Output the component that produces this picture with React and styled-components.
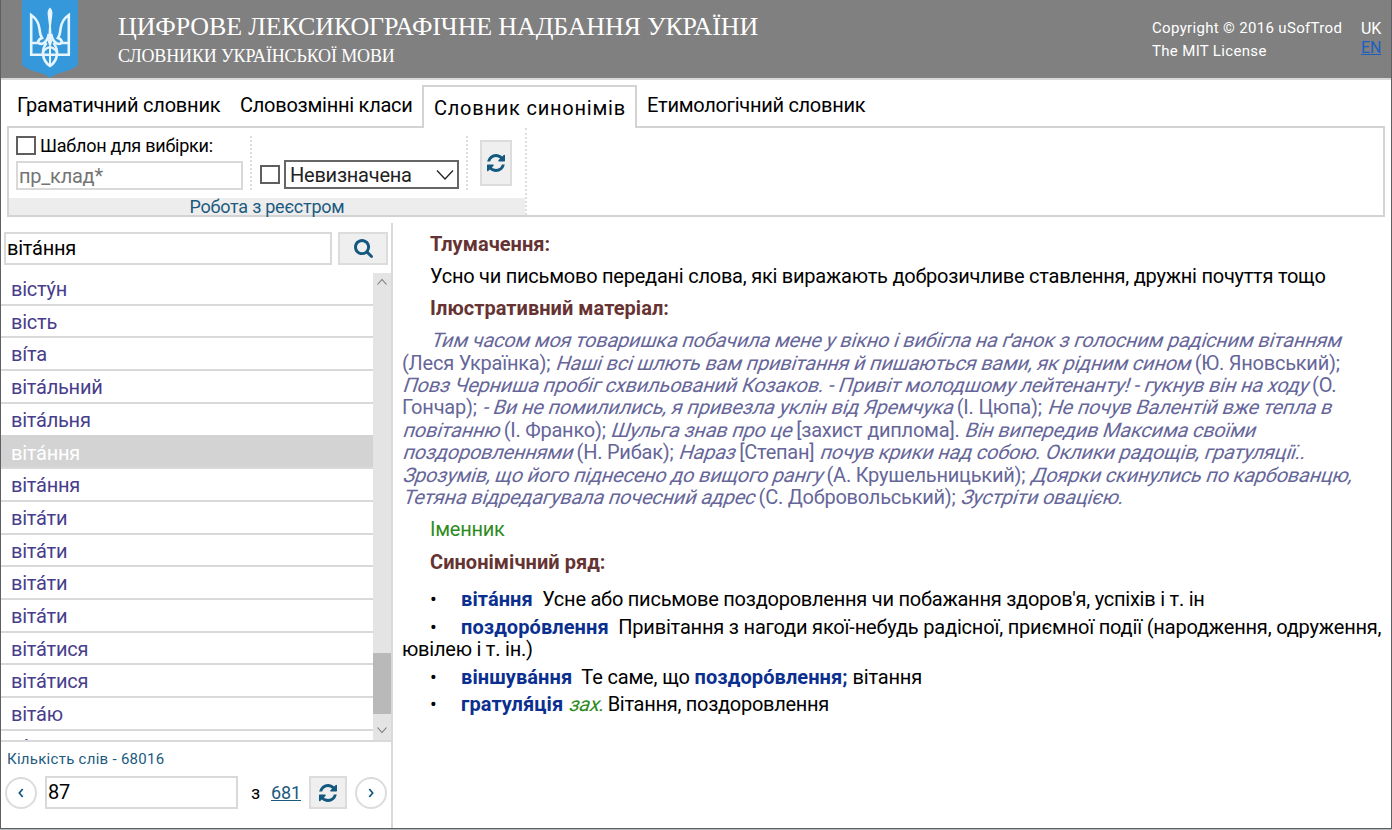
import React from "react";
import styled, { createGlobalStyle, css } from "styled-components";

const Global = createGlobalStyle`
  *, *::before, *::after { box-sizing: border-box; }
  html, body { margin: 0; padding: 0; overflow: hidden; background: #fff; }
  body { font-family: Roboto, "Liberation Sans", sans-serif; font-size: 20px; color: #000; letter-spacing: -0.24px; }
  input, button { font-family: inherit; letter-spacing: inherit; margin: 0; border-radius: 0; }
`;

const Page = styled.div`
  width: 1392px;
  height: 830px;
  display: flex;
  flex-direction: column;
  border-bottom: 1px solid #b4bcbc;
`;
const Frame = styled.div`
  flex: 1;
  min-height: 0;
  display: flex;
  flex-direction: column;
  border: solid #5c5f66;
  border-width: 0 1px 1px 1px;
`;
const Header = styled.header`
  height: 80px;
  flex: none;
  display: flex;
  background: #808080;
  border-bottom: 2px solid #d9d9d9;
  color: #fff;
`;
const Emblem = styled.svg`
  width: 56px;
  height: 78px;
  margin-left: 21px;
  flex: none;
`;
const Titles = styled.div`
  margin-left: 40px;
  flex: 1;
  font-family: "Liberation Serif", serif;
  letter-spacing: -0.14px;
  white-space: nowrap;
`;
const Title = styled.div`
  margin-top: 12px;
  font-size: 26px;
  line-height: 30px;
`;
const Subtitle = styled.div`
  margin-top: 4px;
  font-size: 18px;
  line-height: 20px;
`;
const Copyright = styled.div`
  margin-top: 17px;
  width: 209px;
  font-size: 15px;
  line-height: 23px;
  letter-spacing: 0.33px;
  white-space: nowrap;
`;
const Languages = styled.div`
  margin-top: 19px;
  width: 30px;
  font-size: 16px;
  line-height: 19px;
  letter-spacing: -0.1px;
`;
const LangLink = styled.a`
  display: block;
  color: #1b5fc0;
  text-decoration: underline;
`;

const Tabs = styled.nav`
  height: 48px;
  flex: none;
  display: flex;
  align-items: flex-start;
  padding: 5px 0 0 16px;
  position: relative;
  z-index: 1;
  white-space: nowrap;
`;
const Tab = styled.div`
  width: ${(p) => p.$w}px;
  line-height: 24px;
  padding-top: 8px;
  letter-spacing: ${(p) => p.$ls || -0.2}px;
  ${(p) =>
    p.$active &&
    css`
      height: 43px;
      margin-right: 10px;
      padding: 9px 0 0 10px;
      border: 2px solid #d3d3d3;
      border-bottom: 0;
      background: #fff;
    `}
`;
const Ribbon = styled.section`
  height: 91px;
  flex: none;
  margin: -2px 6px 0 6px;
  border: 2px solid #d3d3d3;
  display: flex;
`;
const Group = styled.div`
  width: 518px;
  display: flex;
  flex-direction: column;
  border-right: 2px dotted #ddd;
`;
const GroupBody = styled.div`
  flex: 1;
  display: flex;
`;
const GroupLabel = styled.div`
  height: 17px;
  background: #ededed;
  color: #1c5a80;
  font-size: 18px;
  line-height: 17px;
  text-align: center;
`;
const Pane = styled.div`
  width: ${(p) => p.$w}px;
  height: 54px;
  margin-top: 8px;
  padding-left: ${(p) => p.$pl}px;
  border-right: ${(p) => (p.$last ? "0" : "2px dotted #ddd")};
`;
const Check = styled.span`
  width: 20px;
  height: 19px;
  flex: none;
  border: 2px solid #5f5f5f;
  background: #fff;
`;
const Inline = styled.div`
  display: flex;
  align-items: center;
  margin-top: ${(p) => p.$mt || 0}px;
  gap: 4px;
`;
const Caption = styled.span`
  font-size: 18px;
  line-height: 19px;
  white-space: nowrap;
`;
const TextBox = styled.input`
  display: block;
  width: ${(p) => p.$w}px;
  height: ${(p) => p.$h}px;
  padding: 0 1px;
  border: 2px solid #d9d9d9;
  font-size: 20px;
  color: #000;
  outline: 0;
  &::placeholder { color: #757575; opacity: 1; }
`;
const TemplateBox = styled(TextBox)`
  margin-top: 6px;
`;
const SearchBox = styled(TextBox)`
  padding-bottom: 1px;
`;
const Select = styled.div`
  width: 175px;
  height: 29px;
  border: 2px solid #666;
  display: flex;
  align-items: center;
  justify-content: space-between;
  padding: 0 3px 0 4px;
  font-size: 20px;
  color: #222;
`;
const IconButton = styled.button`
  width: ${(p) => p.$w}px;
  height: ${(p) => p.$h}px;
  padding: 0;
  border: 2px solid #dcdcdc;
  background: #efefef;
  color: #12587f;
  display: flex;
  align-items: center;
  justify-content: center;
`;

const Main = styled.main`
  flex: 1;
  min-height: 0;
  display: flex;
  padding-top: 6px;
`;
const Side = styled.aside`
  width: 392px;
  flex: none;
  display: flex;
  flex-direction: column;
  border-right: 2px solid #d9d9d9;
`;
const SearchRow = styled.div`
  height: 50px;
  flex: none;
  display: flex;
  gap: 6px;
  padding: 9px 0 0 3px;
`;
const ListArea = styled.div`
  height: 469px;
  flex: none;
  display: flex;
  border-bottom: 2px solid #d9d9d9;
  overflow: hidden;
`;
const List = styled.ul`
  flex: 1;
  margin: 0;
  padding: 0;
  list-style: none;
  overflow: hidden;
`;
const Word = styled.li`
  height: 32.71px;
  padding: 0 0 0 10px;
  line-height: 32px;
  border-bottom: 2px solid #d9d9d9;
  color: ${(p) => (p.$on ? "#fff" : "#483d8b")};
  background: ${(p) => (p.$on ? "#d3d3d3" : "#fff")};
  box-shadow: ${(p) => (p.$on ? "0 -2px 0 #d3d3d3" : "none")};
`;
const Scroll = styled.div`
  width: 18px;
  background: #e4e4e4;
  display: flex;
  flex-direction: column;
  align-items: center;
`;
const Thumb = styled.div`
  width: 18px;
  height: 61px;
  flex: none;
  margin: 362px 0 8px;
  background: #b9b9b9;
`;
const Arrow = styled.svg`
  width: 12px;
  height: 18px;
  flex: none;
  fill: none;
  stroke: #777;
  stroke-width: 1.1;
`;
const Count = styled.div`
  padding: 7px 0 0 6px;
  font-size: 15px;
  line-height: 20px;
  letter-spacing: 0.28px;
  color: #1c5a80;
`;
const Pager = styled.div`
  display: flex;
  align-items: center;
  height: 33px;
  margin-top: 7px;
  padding-left: 4px;
`;
const Round = styled.button`
  width: 32px;
  height: 32px;
  padding: 0;
  border-radius: 50%;
  border: 2px solid #dcdcdc;
  background: #fff;
  display: flex;
  align-items: center;
  justify-content: center;
`;
const NextRound = styled(Round)`
  margin-left: 8px;
`;
const PageBox = styled(TextBox)`
  margin-left: 8px;
  padding-bottom: 2px;
`;
const Of = styled.span`
  width: 20px;
  margin-left: 13px;
  font-size: 18px;
`;
const Total = styled.a`
  width: 38px;
  color: #1c5a80;
  font-size: 18px;
  letter-spacing: -0.1px;
  text-decoration: underline;
`;

const Article = styled.article`
  flex: 1;
  padding: 10px 0 0 9px;
  font-size: 20px;
  line-height: 22.4px;
  white-space: nowrap;
`;
const Heading = styled.h3`
  margin: 0 0 ${(p) => p.$mb}px;
  padding-left: 28px;
  font-size: 20px;
  font-weight: 700;
  color: #663333;
  letter-spacing: 0.04px;
`;
const Para = styled.p`
  margin: 0 0 ${(p) => p.$mb}px;
  padding-left: 28px;
  color: ${(p) => p.$color || "#000"};
`;
const Quote = styled.p`
  margin: 0 0 10px;
  color: #666699;
`;
const Slanted = styled.em`
  display: inline-block;
  font-style: normal;
  transform: skewX(-18deg);
  transform-origin: 0 80%;
`;
const Line = styled.span`
  display: block;
  margin-bottom: ${(p) => p.$mb || 0}px;
  padding-left: ${(p) => p.$indent || 0}px;
  letter-spacing: ${(p) => p.$ls || -0.23}px;
`;
const Item = styled.div`
  display: flex;
  margin-bottom: ${(p) => p.$mb}px;
  padding-left: 28px;
  letter-spacing: ${(p) => p.$ls || -0.24}px;
`;
const Bullet = styled.span`
  width: 31px;
`;
const Term = styled.b`
  color: #0b2f8f;
  letter-spacing: 0.08px;
`;
const Mark = styled(Slanted)`
  color: #2e8b1e;
`;

const Refresh = () => (
  <svg width="18" height="18" viewBox="0 0 1536 1536" fill="currentColor">
    <path d="M1511 928q0 5-1 7-64 268-268 434.500T764 1536q-146 0-282.500-55T238 1324l-129 129q-19 19-45 19t-45-19-19-45V960q0-26 19-45t45-19h448q26 0 45 19t19 45-19 45l-137 137q71 66 161 102t187 36q134 0 250-65t186-179q11-17 53-117 8-23 30-23h192q13 0 22.500 9.500t9.500 22.500zM1536 128v448q0 26-19 45t-45 19h-448q-26 0-45-19t-19-45 19-45l138-138q-148-137-349-137-134 0-250 65T332 500q-11 17-53 117-8 23-30 23H50q-13 0-22.500-9.500T18 608v-7q65-268 270-434.500T768 0q146 0 284 55.500T1297 212l130-129q19-19 45-19t45 19 19 45z" />
  </svg>
);
const Magnifier = () => (
  <svg width="19" height="19" viewBox="0 0 1664 1664" fill="currentColor">
    <path d="M1152 704q0-185-131.500-316.500T704 256 387.500 387.500 256 704t131.500 316.500T704 1152t316.500-131.500T1152 704zm512 832q0 52-38 90t-90 38q-54 0-90-38l-343-342q-179 124-399 124-143 0-273.500-55.500t-225-150-150-225T0 704t55.500-273.500 150-225 225-150T704 0t273.500 55.500 225 150 150 225T1408 704q0 220-124 399l343 343q37 37 37 90z" />
  </svg>
);
const Angle = ({ left }) => (
  <svg width="8" height="12" viewBox="0 0 8 12" fill="none" stroke="#12587f" strokeWidth="1.7">
    <path d={left ? "M5.7 2 2.3 6l3.4 4" : "M2.3 2 5.7 6l-3.400 4"} />
  </svg>
);
const Trident = () => (
  <Emblem viewBox="0 0 56 78">
    <path d="M0 0h56v65Q50 70 41 72 32 74 28 78 24 74 15 72 6 70 0 65z" fill="#3498db" />
    <g fill="none" stroke="#e6f5ff" strokeWidth="2.6">
      <path d="M9.2 55V15Q16.500 20 17.500 29 18 35 20 38 16.500 39 16 42.500 18 44.500 21 43.500 25.500 41.500 26.800 34" />
      <path d="M46.8 55V15Q39.500 20 38.500 29 38 35 36 38 39.500 39 40 42.500 38 44.500 35 43.500 30.500 41.500 29.200 34" />
      <path d="M9 43H16.500M47 43H39.500M8 54.700H48" />
      <path d="M24.5 43Q20.500 48 21 54.500 22 62 28 66 34 62 35 54.500 35.500 48 31.500 43" />
      <path d="M20.5 54Q22 48.500 28 47 34 48.500 35.500 54M28 47V66" strokeWidth="2" />
    </g>
    <path d="M28 7.5Q31 10 30.300 15L29 26 30 42 28 48 26 42 27 26 25.700 15Q25 10 28 7.500z" fill="#e6f5ff" />
  </Emblem>
);

const words = [
  "вісту́н", "вість", "ві́та", "віта́льний", "віта́льня", "віта́ння", "віта́ння",
  "віта́ти", "віта́ти", "віта́ти", "віта́ти", "віта́тися", "віта́тися", "віта́ю", "ві́ха",
];

export default function App() {
  return (
    <Page>
      <Global />
      <Frame>
        <Header>
          <Trident />
          <Titles>
            <Title>ЦИФРОВЕ ЛЕКСИКОГРАФІЧНЕ НАДБАННЯ УКРАЇНИ</Title>
            <Subtitle>СЛОВНИКИ УКРАЇНСЬКОЇ МОВИ</Subtitle>
          </Titles>
          <Copyright>
            <div>Copyright © 2016 uSofTrod</div>
            <div>The MIT License</div>
          </Copyright>
          <Languages>
            UK
            <LangLink>EN</LangLink>
          </Languages>
        </Header>

        <Tabs>
          <Tab $w={223}>Граматичний словник</Tab>
          <Tab $w={182} $ls={-0.25}>Словозмінні класи</Tab>
          <Tab $w={215} $active $ls={0.77}>Словник синонімів</Tab>
          <Tab $w={220} $ls={-0.28}>Етимологічний словник</Tab>
        </Tabs>

        <Ribbon>
          <Group>
            <GroupBody>
              <Pane $w={243} $pl={7}>
                <Inline>
                  <Check />
                  <Caption>Шаблон для вибірки:</Caption>
                </Inline>
                <TemplateBox $w={227} $h={29} placeholder="пр_клад*" />
              </Pane>
              <Pane $w={216} $pl={8}>
                <Inline $mt={24}>
                  <Check />
                  <Select>
                    Невизначена
                    <svg width="18" height="12" viewBox="0 0 18 12" fill="none" stroke="#222" strokeWidth="1.3">
                      <path d="M1 1.5 9 10l8-8.500" />
                    </svg>
                  </Select>
                </Inline>
              </Pane>
              <Pane $w={50} $pl={12} $last>
                <Inline $mt={4}>
                  <IconButton $w={32} $h={46}><Refresh /></IconButton>
                </Inline>
              </Pane>
            </GroupBody>
            <GroupLabel>Робота з реєстром</GroupLabel>
          </Group>
        </Ribbon>

        <Main>
          <Side>
            <SearchRow>
              <SearchBox $w={328} $h={33} defaultValue="віта́ння" />
              <IconButton $w={50} $h={33}><Magnifier /></IconButton>
            </SearchRow>
            <ListArea>
              <List>
                {words.map((w, i) => (
                  <Word key={i} $on={i === 5}>{w}</Word>
                ))}
              </List>
              <Scroll>
                <Arrow viewBox="0 0 12 18"><path d="M1.5 11.500 6 6.500l4.500 5" /></Arrow>
                <Thumb />
                <Arrow viewBox="0 0 12 18"><path d="M1.5 5.500 6 10.500l4.500-5" /></Arrow>
              </Scroll>
            </ListArea>
            <Count>Кількість слів - 68016</Count>
            <Pager>
              <Round><Angle left /></Round>
              <PageBox $w={193} $h={33} defaultValue="87" />
              <Of>з</Of>
              <Total>681</Total>
              <IconButton $w={38} $h={33}><Refresh /></IconButton>
              <NextRound><Angle /></NextRound>
            </Pager>
          </Side>

          <Article>
            <Heading $mb={10}>Тлумачення:</Heading>
            <Para $mb={9}>Усно чи письмово передані слова, які виражають доброзичливе ставлення, дружні почуття тощо</Para>
            <Heading $mb={10}>Ілюстративний матеріал:</Heading>
            <Quote>
              <Line $indent={28}><Slanted>Тим часом моя товаришка побачила мене у вікно і вибігла на ґанок з голосним радісним вітанням</Slanted></Line>
              <Line>(Леся Українка); <Slanted>Наші всі шлють вам привітання й пишаються вами, як рідним сином</Slanted> (Ю. Яновський);</Line>
              <Line $ls={-0.21}><Slanted>Повз Черниша пробіг схвильований Козаков. - Привіт молодшому лейтенанту! - гукнув він на ходу</Slanted> (О.</Line>
              <Line $ls={-0.2}>Гончар); <Slanted>- Ви не помилились, я привезла уклін від Яремчука</Slanted> (І. Цюпа); <Slanted>Не почув Валентій вже тепла в</Slanted></Line>
              <Line><Slanted>повітанню</Slanted> (І. Франко); <Slanted>Шульга знав про це</Slanted> [захист диплома]. <Slanted>Він випередив Максима своїми</Slanted></Line>
              <Line><Slanted>поздоровленнями</Slanted> (Н. Рибак); <Slanted>Нараз</Slanted> [Степан] <Slanted>почув крики над собою. Оклики радощів, гратуляції..</Slanted></Line>
              <Line><Slanted>Зрозумів, що його піднесено до вищого рангу</Slanted> (А. Крушельницький); <Slanted>Доярки скинулись по карбованцю,</Slanted></Line>
              <Line><Slanted>Тетяна відредагувала почесний адрес</Slanted> (С. Добровольський); <Slanted>Зустріти овацією.</Slanted></Line>
            </Quote>
            <Para $mb={10} $color="#2e8b1e">Іменник</Para>
            <Heading $mb={15}>Синонімічний ряд:</Heading>
            <Item $mb={5}>
              <Bullet>•</Bullet>
              <span><Term>віта́ння</Term>&nbsp; Усне або письмове поздоровлення чи побажання здоров'я, успіхів і т. ін</span>
            </Item>
            <Item $mb={0} $ls={-0.19}>
              <Bullet>•</Bullet>
              <span><Term>поздоро́влення</Term>&nbsp; Привітання з нагоди якої-небудь радісної, приємної події (народження, одруження,</span>
            </Item>
            <Line $mb={5}>ювілею і т. ін.)</Line>
            <Item $mb={5} $ls={-0.16}>
              <Bullet>•</Bullet>
              <span><Term>віншува́ння</Term>&nbsp; Те саме, що <Term>поздоро́влення;</Term> вітання</span>
            </Item>
            <Item $mb={0} $ls={-0.28}>
              <Bullet>•</Bullet>
              <span><Term>гратуля́ція</Term> <Mark>зах.</Mark> Вітання, поздоровлення</span>
            </Item>
          </Article>
        </Main>
      </Frame>
    </Page>
  );
}
